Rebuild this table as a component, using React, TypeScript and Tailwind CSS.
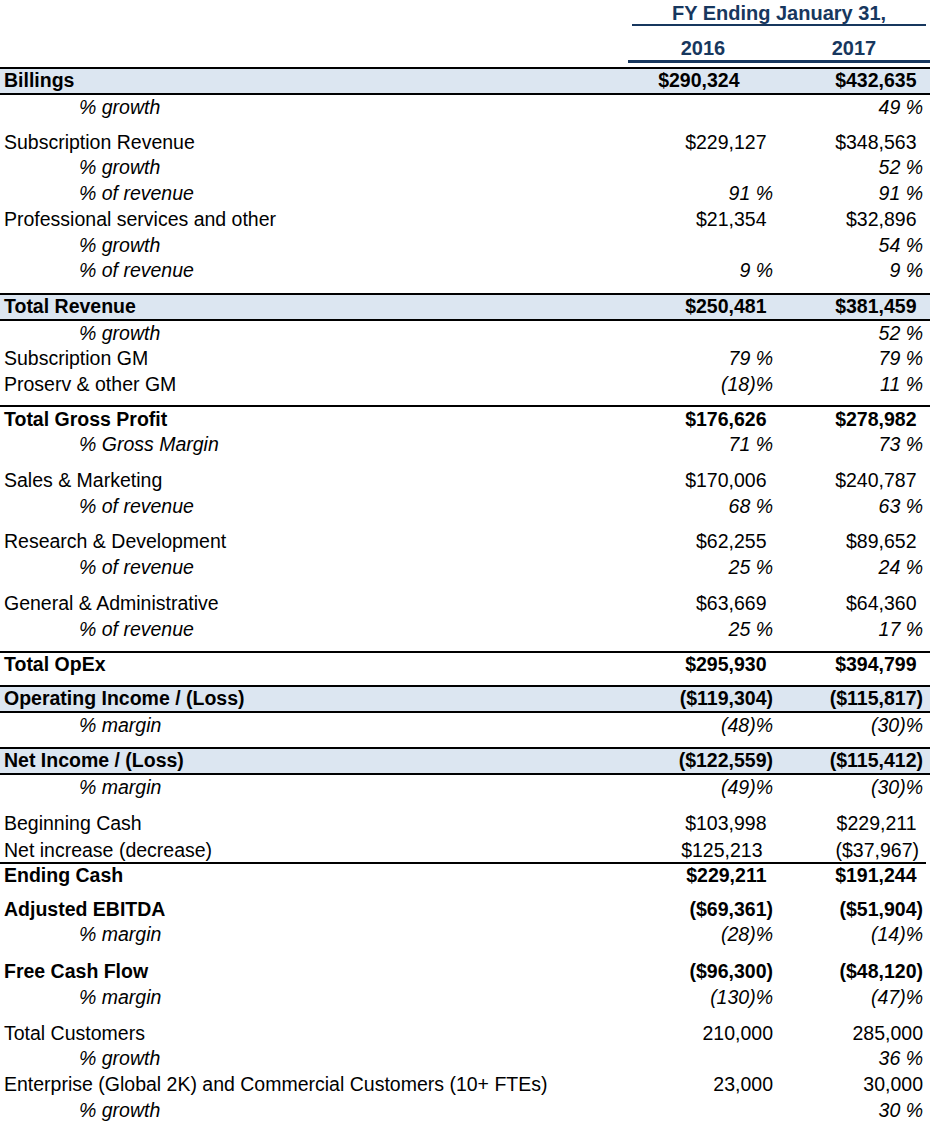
type Kind = "band" | "total" | "plain" | "pct" | "bold";

interface Row {
  label: string;
  a?: string;
  b?: string;
  kind: Kind;
  mt?: string;
  h?: string;
  extra?: string;
  aPad?: string;
  noPad?: boolean;
}

const rows: Row[] = [
  { label: "Billings", a: "$290,324", b: "$432,635", kind: "band", mt: "mt-[4px]", aPad: "pr-[27px]" },
  { label: "% growth", b: "49 %", kind: "pct" },

  { label: "Subscription Revenue", a: "$229,127", b: "$348,563", kind: "plain", mt: "mt-[9px]" },
  { label: "% growth", b: "52 %", kind: "pct" },
  { label: "% of revenue", a: "91 %", b: "91 %", kind: "pct" },
  { label: "Professional services and other", a: "$21,354", b: "$32,896", kind: "plain" },
  { label: "% growth", b: "54 %", kind: "pct" },
  { label: "% of revenue", a: "9 %", b: "9 %", kind: "pct" },

  { label: "Total Revenue", a: "$250,481", b: "$381,459", kind: "band", mt: "mt-[9px]" },
  { label: "% growth", b: "52 %", kind: "pct", h: "h-[25.5px]" },
  { label: "Subscription GM", a: "79 %", b: "79 %", kind: "plain", h: "h-[25.5px]" },
  { label: "Proserv & other GM", a: "(18)%", b: "11 %", kind: "plain", h: "h-[25.5px]" },

  { label: "Total Gross Profit", a: "$176,626", b: "$278,982", kind: "total", mt: "mt-[8px]", h: "h-[25px]" },
  { label: "% Gross Margin", a: "71 %", b: "73 %", kind: "pct" },

  { label: "Sales & Marketing", a: "$170,006", b: "$240,787", kind: "plain", mt: "mt-[10px]" },
  { label: "% of revenue", a: "68 %", b: "63 %", kind: "pct" },
  { label: "Research & Development", a: "$62,255", b: "$89,652", kind: "plain", mt: "mt-[10px]" },
  { label: "% of revenue", a: "25 %", b: "24 %", kind: "pct" },
  { label: "General & Administrative", a: "$63,669", b: "$64,360", kind: "plain", mt: "mt-[10px]" },
  { label: "% of revenue", a: "25 %", b: "17 %", kind: "pct" },

  { label: "Total OpEx", a: "$295,930", b: "$394,799", kind: "total", mt: "mt-[9px]", h: "h-[24px]" },
  { label: "Operating Income / (Loss)", a: "($119,304)", b: "($115,817)", kind: "band", mt: "mt-[8px]" },
  { label: "% margin", a: "(48)%", b: "(30)%", kind: "pct" },
  { label: "Net Income / (Loss)", a: "($122,559)", b: "($115,412)", kind: "band", mt: "mt-[8px]" },
  { label: "% margin", a: "(49)%", b: "(30)%", kind: "pct" },

  { label: "Beginning Cash", a: "$103,998", b: "$229,211", kind: "plain", mt: "mt-[10px]" },
  { label: "Net increase (decrease)", a: "$125,213", b: "($37,967)", kind: "plain", h: "h-[22.5px]", extra: "box-content pt-[3px] border-b-2 border-black mr-[4px]" },
  { label: "Ending Cash", a: "$229,211", b: "$191,244", kind: "bold", h: "h-[24px]" },

  { label: "Adjusted EBITDA", a: "($69,361)", b: "($51,904)", kind: "bold", mt: "mt-[9px]" },
  { label: "% margin", a: "(28)%", b: "(14)%", kind: "pct" },
  { label: "Free Cash Flow", a: "($96,300)", b: "($48,120)", kind: "bold", mt: "mt-[11px]" },
  { label: "% margin", a: "(130)%", b: "(47)%", kind: "pct" },

  { label: "Total Customers", a: "210,000", b: "285,000", kind: "plain", mt: "mt-[10px]", noPad: true },
  { label: "% growth", b: "36 %", kind: "pct" },
  { label: "Enterprise (Global 2K) and Commercial Customers (10+ FTEs)", a: "23,000", b: "30,000", kind: "plain", noPad: true },
  { label: "% growth", b: "30 %", kind: "pct" },
];

function Value({ v, pad, className }: { v?: string; pad: boolean; className: string }) {
  if (!v) return <div className={className} />;
  const isPct = v.endsWith("%");
  // positive numbers leave room for a ")" like the excel format does
  const needsPad = pad && !v.endsWith(")") && !isPct;
  return (
    <div className={`${className} ${isPct ? "italic" : ""}`}>
      {v}
      {needsPad && <span className="invisible">)</span>}
    </div>
  );
}

function TableRow({ r }: { r: Row }) {
  const isPct = r.kind === "pct";
  const isBold = r.kind === "band" || r.kind === "total" || r.kind === "bold";

  let box = r.h ?? "h-[25.7px]";
  if (r.kind === "band") box = "h-[28px] border-y-2 border-black bg-[#dce6f1]";
  if (r.kind === "total") box = `${r.h ?? "h-[25px]"} box-content border-t-2 border-black`;

  const font = isBold ? "font-bold" : "";

  return (
    <div className={`flex items-center pr-[7px] ${box} ${r.mt ?? ""} ${r.extra ?? ""} ${font}`}>
      <div className={`flex-1 whitespace-nowrap ${isPct ? "pl-[79px] italic" : "pl-[4px]"}`}>{r.label}</div>
      <Value v={r.a} pad={!r.noPad} className={`w-[150px] text-right whitespace-nowrap ${r.aPad ?? ""}`} />
      <Value v={r.b} pad={!r.noPad} className="w-[150px] text-right whitespace-nowrap" />
    </div>
  );
}

export default function App() {
  return (
    <div className="w-[930px] h-[1125px] bg-white text-black text-[19.5px] leading-none font-['Liberation_Sans',Arial,sans-serif] overflow-hidden">
      {/* header */}
      <div className="ml-[632px] w-[294px] pt-[2px] text-center text-[20px] leading-[22px] font-bold text-[#17375e] border-b-2 border-[#17375e]">
        FY Ending January 31,
      </div>
      <div className="ml-[628px] flex pt-[10px] text-[20px] leading-[24px] font-bold text-[#17375e] border-b-[3px] border-[#17375e]">
        <div className="w-[150px] text-center">2016</div>
        <div className="flex-1 text-center">2017</div>
      </div>

      {rows.map((r, i) => (
        <TableRow key={i} r={r} />
      ))}
    </div>
  );
}
